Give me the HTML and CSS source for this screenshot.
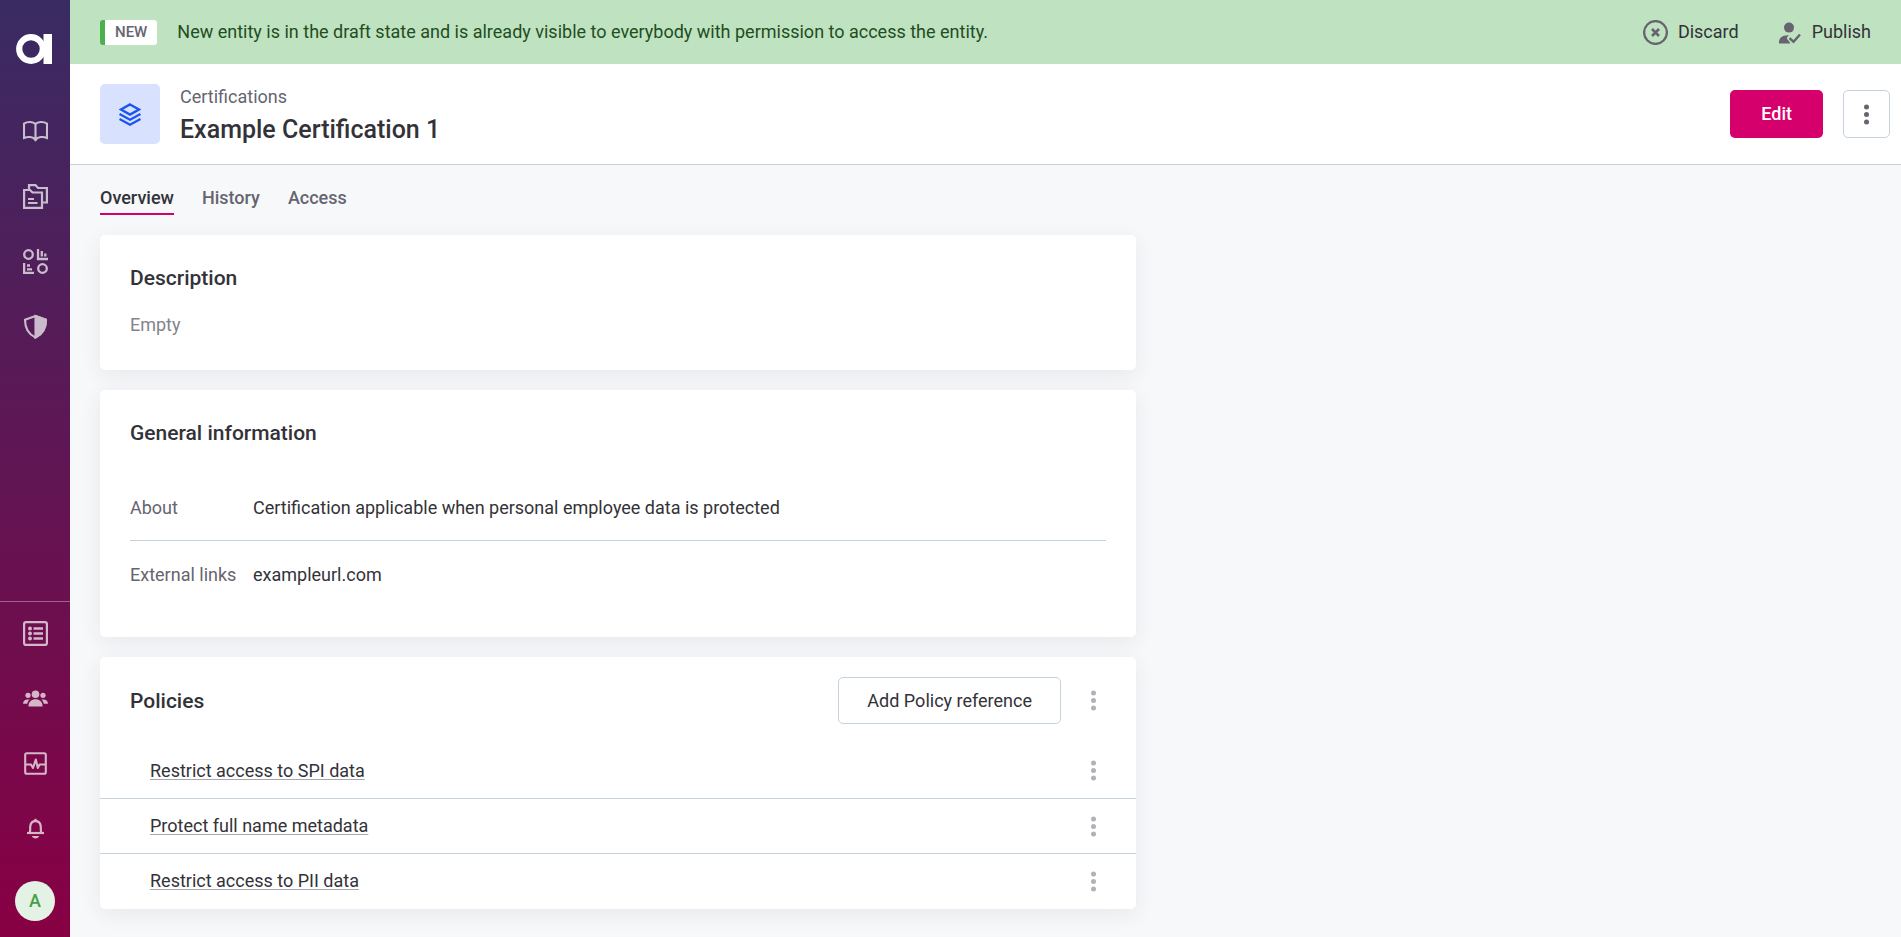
FILE: index.html
```html
<!DOCTYPE html>
<html lang="en">
<head>
  <meta charset="UTF-8">
  <meta name="viewport" content="width=device-width, initial-scale=1">
  <title>Example Certification 1</title>
  <link rel="stylesheet" href="styles.css">
</head>
<body>
  <!-- shared kebab icon -->
  <svg class="sprite" aria-hidden="true">
    <symbol id="kebab" viewBox="0 0 5 21">
      <circle cx="2.5" cy="3" r="2.5"/>
      <circle cx="2.5" cy="10.5" r="2.5"/>
      <circle cx="2.5" cy="18" r="2.5"/>
    </symbol>
  </svg>

  <div class="app">
    <aside class="sidebar">
      <a class="logo" href="#" aria-label="Home">
        <svg width="38" height="30" viewBox="0 0 38 30">
          <circle cx="15" cy="15" r="11.8" fill="none" stroke="#fff" stroke-width="6.2"/>
          <path d="M27.5 0H36V30H27.5Z" fill="#fff"/>
        </svg>
      </a>

      <nav class="nav">
        <a class="nav-item" href="#" aria-label="Glossary">
          <svg class="line" width="25" height="25" viewBox="0 0 25 25" stroke-width="2.1">
            <path d="M12.5 5C10.3 2.6 4.5 2.3 1 4.6V19C4.500 17.4 10.3 17.6 12.5 20.5C14.7 17.6 20.5 17.4 24 19V4.6C20.5 2.3 14.7 2.6 12.5 5ZM12.5 5V20"/>
            <path d="M9.5 19L12.5 22.8L15.5 19Z" fill="currentColor" stroke="none"/>
          </svg>
        </a>
        <a class="nav-item" href="#" aria-label="Catalog">
          <svg class="line" width="25" height="25" viewBox="0 0 25 25" stroke-width="2.2">
            <path d="M1.1 6H7L9.5 8.5H19V23.900H1.1Z"/>
            <path d="M6 6V1.1H12.5L15 4H23.900V18.5H19"/>
            <path d="M5 15H11M5 19H14.5"/>
          </svg>
        </a>
        <a class="nav-item" href="#" aria-label="Data quality">
          <svg class="line" width="25" height="25" viewBox="0 0 25 25" stroke-width="2.3">
            <circle cx="5.5" cy="5.5" r="4.3"/>
            <circle cx="19.5" cy="19.5" r="4.3"/>
            <path d="M15 0V10H25M18.8 2V7.5M22.3 4.5V7.5"/>
            <path d="M1.1 14V23.900H11M4 16.5H7M4 20.3H9"/>
          </svg>
        </a>
        <a class="nav-item" href="#" aria-label="Policies">
          <svg class="line" width="25" height="25" viewBox="0 0 25 25" stroke-width="2.1">
            <path d="M12.5 2L23 5.7C23 14 20 20 12.5 23.5C5 20 2 14 2 5.7Z" stroke-linejoin="round"/>
            <path d="M12.5 2L23 5.7C23 14 20 20 12.5 23.5Z" fill="currentColor"/>
          </svg>
        </a>
      </nav>

      <nav class="nav nav-bottom">
        <a class="nav-item" href="#" aria-label="Tasks">
          <svg class="line" width="25" height="25" viewBox="0 0 25 25" stroke-width="2.2">
            <rect x="1.1" y="1.1" width="22.8" height="22.8" rx="2"/>
            <path d="M10.5 7.5H20M10.5 12.5H20M10.5 17.5H20" stroke-width="2.4"/>
            <g fill="currentColor" stroke="none">
              <circle cx="7" cy="7.5" r="2"/>
              <circle cx="7" cy="12.5" r="2"/>
              <circle cx="7" cy="17.5" r="2"/>
            </g>
          </svg>
        </a>
        <a class="nav-item" href="#" aria-label="Users">
          <svg width="25" height="25" viewBox="0 0 25 25">
            <circle cx="12.5" cy="8.3" r="3.8"/>
            <circle cx="5" cy="9.3" r="2.6"/>
            <circle cx="20" cy="9.3" r="2.6"/>
            <path d="M5.5 20.5C5 10.8 20 10.8 19.5 20.5Z"/>
            <path d="M0 17.8C0 14.2 3 12.8 6.8 13.6C5.3 14.7 4.6 16 4.3 17.8Z"/>
            <path d="M25 17.8C25 14.2 22 12.8 18.2 13.6C19.7 14.7 20.4 16 20.7 17.8Z"/>
          </svg>
        </a>
        <a class="nav-item" href="#" aria-label="Monitoring">
          <svg class="line" width="25" height="25" viewBox="0 0 25 25" stroke-width="2.1">
            <rect x="2.2" y="2.2" width="20.6" height="20.6" rx="1.5"/>
            <path d="M2 13.5H8L10 17L12.8 8.5L14.8 17L16.5 13.5H23" stroke-linejoin="round"/>
          </svg>
        </a>
        <a class="nav-item" href="#" aria-label="Notifications">
          <svg class="line" width="25" height="25" viewBox="0 0 25 25" stroke-width="2.2">
            <path d="M4 17H21"/>
            <path d="M6.8 16.5C7.5 14.5 7 12.5 7.3 10C7.7 6.800 9.8 5.2 12.5 5.2C15.2 5.2 17.3 6.8 17.7 10C18 12.5 17.5 14.5 18.2 16.5"/>
            <path d="M12.5 2.8V5.5"/>
            <path d="M8.8 20H16.2C15.5 23.2 9.5 23.2 8.8 20Z" fill="currentColor" stroke="none"/>
          </svg>
        </a>
      </nav>
      <button class="avatar" type="button">A</button>
    </aside>

    <div class="page">
      <div class="banner">
        <span class="badge">NEW</span>
        <p class="banner-text">New entity is in the draft state and is already visible to everybody with permission to access the entity.</p>
        <div class="banner-actions">
          <button class="banner-btn" type="button">
            <svg class="line" width="25" height="25" viewBox="0 0 25 25">
              <circle cx="12.5" cy="12.5" r="11.4" stroke-width="2.3"/>
              <path d="M9 9L16 16M16 9L9 16" stroke-width="2.6"/>
            </svg>
            <span>Discard</span>
          </button>
          <button class="banner-btn" type="button">
            <svg width="25" height="25" viewBox="0 0 25 25">
              <circle cx="12" cy="7.6" r="5"/>
              <path d="M2 23.5C1.5 17.5 5.5 14.8 12 15.2C9.5 17.5 9.3 18.5 11.500 20.5L13.5 23.5Z"/>
              <path d="M12.500 18.2L16.5 21.7L23 14.5" fill="none" stroke="currentColor" stroke-width="2.4"/>
            </svg>
            <span>Publish</span>
          </button>
        </div>
      </div>

      <header class="header">
        <div class="entity-icon">
          <svg class="line" width="22" height="23" viewBox="0 0 22 23" stroke-width="2.3">
            <path d="M11 1.4L20 6.5L11 11.6L2 6.5Z"/>
            <path d="M0.5 11L11 16.7L21.5 11"/>
            <path d="M0.5 16L11 21.7L21.5 16"/>
          </svg>
        </div>
        <div class="heading">
          <a class="breadcrumb" href="#">Certifications</a>
          <h1>Example Certification 1</h1>
        </div>
        <div class="header-actions">
          <button class="btn btn-primary" type="button">Edit</button>
          <button class="btn btn-icon" type="button" aria-label="More actions">
            <svg width="5" height="21"><use href="#kebab"/></svg>
          </button>
        </div>
      </header>

      <nav class="tabs">
        <a class="tab active" href="#">Overview</a>
        <a class="tab" href="#">History</a>
        <a class="tab" href="#">Access</a>
      </nav>

      <main class="content">
        <div class="cards">
          <section class="card card-padded">
            <h2>Description</h2>
            <p class="empty">Empty</p>
          </section>

          <section class="card card-padded">
            <h2>General information</h2>
            <dl class="info">
              <div class="info-row">
                <dt>About</dt>
                <dd>Certification applicable when personal employee data is protected</dd>
              </div>
              <div class="info-row">
                <dt>External links</dt>
                <dd><a href="#">exampleurl.com</a></dd>
              </div>
            </dl>
          </section>

          <section class="card card-list">
            <div class="card-header">
              <h2>Policies</h2>
              <button class="btn btn-outline" type="button">Add Policy reference</button>
              <button class="kebab" type="button" aria-label="Policies menu"><svg width="5" height="21"><use href="#kebab"/></svg></button>
            </div>
            <ul class="policies">
              <li>
                <a href="#">Restrict access to SPI data</a>
                <button class="kebab" type="button" aria-label="Row menu"><svg width="5" height="21"><use href="#kebab"/></svg></button>
              </li>
              <li>
                <a href="#">Protect full name metadata</a>
                <button class="kebab" type="button" aria-label="Row menu"><svg width="5" height="21"><use href="#kebab"/></svg></button>
              </li>
              <li>
                <a href="#">Restrict access to PII data</a>
                <button class="kebab" type="button" aria-label="Row menu"><svg width="5" height="21"><use href="#kebab"/></svg></button>
              </li>
            </ul>
          </section>
        </div>
      </main>
    </div>
  </div>
</body>
</html>
```
FILE: styles.css
```css
* {
  box-sizing: border-box;
}
body {
  margin: 0;
  background: #f6f8fa;
  color: #333238;
  font-family: Roboto, "Liberation Sans", sans-serif;
  font-size: 18px;
  line-height: 26px;
}
h1, h2, p, dl, dd, ul {
  margin: 0;
  padding: 0;
}
a {
  color: inherit;
  text-decoration: none;
}
button {
  font: inherit;
  color: inherit;
  background: none;
  border: 0;
  padding: 0;
  cursor: pointer;
}
svg {
  display: block;
  fill: currentColor;
}
svg.line {
  fill: none;
  stroke: currentColor;
}
.sprite {
  position: absolute;
  width: 0;
  height: 0;
}
.app {
  display: flex;
  min-height: 100vh;
}

/* sidebar */
.sidebar {
  display: flex;
  flex-direction: column;
  align-items: center;
  flex: none;
  width: 70px;
  height: 100vh;
  position: sticky;
  top: 0;
  padding-bottom: 16px;
  background: linear-gradient(180deg, #392b63, #880044);
}
.logo {
  padding: 34px 0 35px;
}
.nav {
  width: 100%;
}
.nav-bottom {
  margin-top: auto;
  box-shadow: inset 0 1px rgba(255, 255, 255, 0.35);
}
.nav-item {
  display: flex;
  align-items: center;
  justify-content: center;
  height: 65px;
  color: #fff;
}
.nav-item svg {
  opacity: 0.7;
}
.avatar {
  width: 40px;
  height: 40px;
  margin-top: 20px;
  flex: none;
  border-radius: 50%;
  background: #e3f2e4;
  color: #43a047;
  font-size: 18px;
  font-weight: 500;
}

/* top banner */
.page {
  flex: 1;
  min-width: 0;
}
.banner {
  display: flex;
  align-items: center;
  min-height: 64px;
  padding: 0 30px;
  background: #bfe3c0;
}
.badge {
  height: 25px;
  padding: 0 10px;
  border-left: 5px solid #4caf50;
  border-radius: 3px;
  background: #fff;
  color: #66646f;
  font-size: 15px;
  font-weight: 500;
  line-height: 25px;
}
.banner-text {
  margin-left: 20px;
  color: #1f4d22;
}
.banner-actions {
  display: flex;
  gap: 38px;
  margin-left: auto;
}
.banner-btn {
  display: flex;
  align-items: center;
  gap: 10px;
}
.banner-btn svg {
  color: #66646f;
}

/* header */
.header {
  display: flex;
  align-items: center;
  gap: 20px;
  padding: 17px 11px 17px 30px;
  border-bottom: 1px solid #c6d3dd;
  background: #fff;
}
.entity-icon {
  display: flex;
  align-items: center;
  justify-content: center;
  width: 60px;
  height: 60px;
  border-radius: 5px;
  background: #d8e1fd;
  color: #1c54f0;
}
.breadcrumb {
  display: block;
  line-height: 32px;
  color: #66646f;
}
h1 {
  font-size: 25px;
  font-weight: 500;
  line-height: 34px;
}
.header-actions {
  display: flex;
  gap: 20px;
  margin-left: auto;
}
.btn {
  display: flex;
  align-items: center;
  justify-content: center;
  height: 48px;
  padding: 0 31px;
  border-radius: 5px;
}
.btn-primary {
  background: #d6006d;
  color: #fff;
  font-weight: 500;
}
.btn-icon {
  width: 47px;
  padding: 0;
  border: 1px solid #c6d3dd;
  color: #66646f;
}
.btn-outline {
  height: 47px;
  padding: 0 28px;
  border: 1px solid #c6d3dd;
}

/* tabs */
.tabs {
  display: flex;
  gap: 28px;
  padding: 20px 30px;
}
.tab {
  padding-bottom: 2px;
  border-bottom: 2px solid transparent;
  color: #66646f;
  font-weight: 500;
}
.tab.active {
  border-color: #d6006d;
  color: #333238;
}

/* cards */
.content {
  display: grid;
  grid-template-columns: 7fr 5fr;
  gap: 25px;
  padding: 0 0 27px 30px;
}
.cards {
  display: flex;
  flex-direction: column;
  gap: 20px;
}
.card {
  border-radius: 5px;
  background: #fff;
  box-shadow: 0 5px 20px rgba(50, 50, 60, 0.08);
}
.card-padded {
  padding: 30px;
}
.card-list {
  padding-bottom: 1px;
}
h2 {
  font-size: 21px;
  font-weight: 500;
  line-height: 26px;
}
.empty {
  margin: 21px 0 2px;
  color: #84838c;
}
.info {
  margin-top: 28px;
}
.info-row {
  display: flex;
  gap: 16px;
  padding: 21px 0 19px;
}
.info-row + .info-row {
  border-top: 1px solid #c6d3dd;
}
.info dt {
  width: 107px;
  flex: none;
  color: #66646f;
}
.card-header {
  display: flex;
  align-items: center;
  gap: 10px;
  padding: 20px 20px 19px 30px;
}
.card-header h2 {
  margin-right: auto;
}
.kebab {
  display: flex;
  align-items: center;
  justify-content: center;
  width: 45px;
  height: 45px;
  color: #b3b1b7;
}
.policies {
  list-style: none;
}
.policies li {
  display: flex;
  align-items: center;
  justify-content: space-between;
  height: 55px;
  padding: 0 20px 0 50px;
}
.policies li + li {
  border-top: 1px solid #c6d3dd;
}
.policies a {
  text-decoration: underline 1px #a9a7ae;
  text-underline-offset: 2px;
}
```
